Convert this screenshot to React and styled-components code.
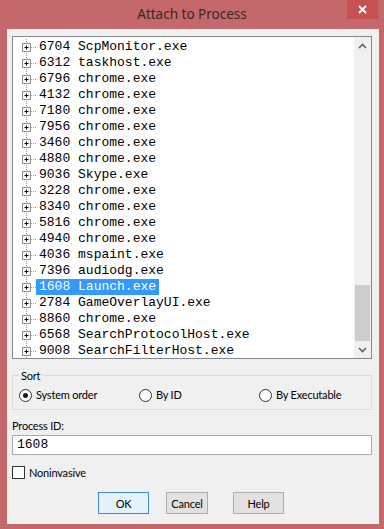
import styled, { createGlobalStyle } from "styled-components";

const GlobalStyle = createGlobalStyle`
  html, body {
    margin: 0;
    padding: 0;
    background: #c4686c;
  }
  body {
    font-family: Lato, "Noto Sans", sans-serif;
    color: #000;
  }
`;

const Window = styled.div`
  width: 384px;
  height: 529px;
  box-sizing: border-box;
  background: #c4686c;
  display: flex;
  flex-direction: column;
  padding: 0 5px 5px 7px;
`;

const TitleBar = styled.div`
  position: relative;
  height: 30px;
  margin: 0 -5px 0 -7px;
  display: flex;
  align-items: center;
  justify-content: center;
  padding-bottom: 2px;
  box-sizing: border-box;
`;

const Title = styled.div`
  font-family: "Noto Sans", sans-serif;
  font-size: 13.5px;
  color: #3a2626;
`;

const CloseButton = styled.div`
  position: absolute;
  top: 0;
  right: 6px;
  width: 31px;
  height: 19px;
  background: #c75050;
  display: flex;
  align-items: center;
  justify-content: center;
`;

const Client = styled.div`
  flex: 1;
  background: #f0f0f0;
  display: flex;
  flex-direction: column;
  padding: 7px 7px 10px 5px;
  font-size: 11px;
  letter-spacing: -0.2px;
`;

const ProcessList = styled.div`
  height: 323px;
  box-sizing: border-box;
  border: 1px solid #828790;
  background: #fff;
  display: flex;
  letter-spacing: 0;
`;

const Rows = styled.div`
  flex: 1;
  padding-top: 2px;
  overflow: hidden;
`;

const Row = styled.div`
  display: flex;
  height: 16px;
  align-items: center;
`;

const RowLabel = styled.span`
  font-family: "Liberation Mono", monospace;
  font-size: 13px;
  line-height: 16px;
  height: 16px;
  padding: 0 3px;
  white-space: pre;
  background: ${(p) => (p.$selected ? "#3399ff" : "transparent")};
  color: ${(p) => (p.$selected ? "#fff" : "#000")};
`;

const ScrollBar = styled.div`
  width: 17px;
  background: #f0f0f0;
  display: flex;
  flex-direction: column;
`;

const ScrollArrow = styled.div`
  height: 17px;
  display: flex;
  align-items: center;
  justify-content: center;
`;

const ScrollTrack = styled.div`
  flex: 1;
  display: flex;
  flex-direction: column;
  justify-content: flex-end;
`;

const ScrollThumb = styled.div`
  height: 56px;
  margin: 0 1px;
  background: #cdcdcd;
`;

const SortGroup = styled.fieldset`
  margin: 8px 0 0;
  padding: 3px 6px 6px;
  border: 1px solid #dcdcdc;
  min-width: 0;
`;

const Legend = styled.legend`
  padding: 0 2px;
  font-size: 11px;
  line-height: 17px;
`;

const RadioRow = styled.div`
  display: grid;
  grid-template-columns: repeat(3, 120px);
`;

const Option = styled.label`
  display: flex;
  align-items: center;
  gap: 4px;
  height: 16px;
  line-height: 16px;
`;

const RadioCircle = styled.span`
  width: 13px;
  height: 13px;
  box-sizing: border-box;
  border: 1px solid #333;
  border-radius: 50%;
  background: #fff;
  display: flex;
  align-items: center;
  justify-content: center;

  &::after {
    content: "";
    width: 5px;
    height: 5px;
    border-radius: 50%;
    background: ${(p) => (p.$checked ? "#1a1a1a" : "transparent")};
  }
`;

const FieldLabel = styled.div`
  margin-top: 8px;
  line-height: 15px;
`;

const TextInput = styled.div`
  margin-top: 2px;
  height: 20px;
  box-sizing: border-box;
  border: 1px solid #abadb3;
  background: #fff;
  padding: 0 4px;
  font-family: "Liberation Mono", monospace;
  font-size: 13px;
  line-height: 18px;
  letter-spacing: 0;
`;

const CheckRow = styled.label`
  margin-top: 11px;
  display: flex;
  align-items: center;
  gap: 4px;
  height: 13px;
`;

const CheckBox = styled.span`
  width: 13px;
  height: 13px;
  box-sizing: border-box;
  border: 1px solid #333;
  background: #fff;
`;

const ButtonRow = styled.div`
  margin-top: 13px;
  display: flex;
  padding-left: 86px;
  gap: 17px;
`;

const Button = styled.div`
  width: ${(p) => p.$width}px;
  height: 22px;
  box-sizing: border-box;
  border: 1px solid ${(p) => (p.$default ? "#3c8ad8" : "#adadad")};
  background: ${(p) => (p.$default ? "#e5f1fb" : "#e1e1e1")};
  display: flex;
  align-items: center;
  justify-content: center;
  margin-right: ${(p) => p.$extra || 0}px;
`;

const processes = [
  ["6704", "ScpMonitor.exe"],
  ["6312", "taskhost.exe"],
  ["6796", "chrome.exe"],
  ["4132", "chrome.exe"],
  ["7180", "chrome.exe"],
  ["7956", "chrome.exe"],
  ["3460", "chrome.exe"],
  ["4880", "chrome.exe"],
  ["9036", "Skype.exe"],
  ["3228", "chrome.exe"],
  ["8340", "chrome.exe"],
  ["5816", "chrome.exe"],
  ["4940", "chrome.exe"],
  ["4036", "mspaint.exe"],
  ["7396", "audiodg.exe"],
  ["1608", "Launch.exe"],
  ["2784", "GameOverlayUI.exe"],
  ["8860", "chrome.exe"],
  ["6568", "SearchProtocolHost.exe"],
  ["9008", "SearchFilterHost.exe"],
];

const Branch = () => (
  <svg width="23" height="16" viewBox="0 0 23 16">
    <line x1="13.5" y1="0" x2="13.5" y2="16" stroke="#a0a0a0" strokeDasharray="1 1" />
    <line x1="18" y1="8.5" x2="23" y2="8.5" stroke="#a0a0a0" strokeDasharray="1 1" />
    <rect x="9.5" y="4.5" width="8" height="8" fill="#f6f6f6" stroke="#919191" />
    <path d="M11.5 8.5h4M13.5 6.5v4" stroke="#000" />
  </svg>
);

const Chevron = ({ down }) => (
  <svg width="9" height="6" viewBox="0 0 9 6">
    <path
      d={down ? "M1 1l3.5 3.5L8 1" : "M1 5l3.5-3.5L8 5"}
      fill="none"
      stroke="#606060"
      strokeWidth="1.6"
    />
  </svg>
);

const Radio = ({ checked, children }) => (
  <Option>
    <RadioCircle $checked={checked} />
    {children}
  </Option>
);

export default function App() {
  return (
    <>
      <GlobalStyle />
      <Window>
        <TitleBar>
          <Title>Attach to Process</Title>
          <CloseButton>
            <svg width="9" height="9" viewBox="0 0 9 9">
              <path d="M1 1l7 7M8 1l-7 7" stroke="#fff" strokeWidth="1.8" />
            </svg>
          </CloseButton>
        </TitleBar>
        <Client>
          <ProcessList>
            <Rows>
              {processes.map(([pid, name]) => (
                <Row key={pid}>
                  <Branch />
                  <RowLabel $selected={pid === "1608"}>
                    {pid} {name}
                  </RowLabel>
                </Row>
              ))}
            </Rows>
            <ScrollBar>
              <ScrollArrow>
                <Chevron />
              </ScrollArrow>
              <ScrollTrack>
                <ScrollThumb />
              </ScrollTrack>
              <ScrollArrow>
                <Chevron down />
              </ScrollArrow>
            </ScrollBar>
          </ProcessList>

          <SortGroup>
            <Legend>Sort</Legend>
            <RadioRow>
              <Radio checked>System order</Radio>
              <Radio>By ID</Radio>
              <Radio>By Executable</Radio>
            </RadioRow>
          </SortGroup>

          <FieldLabel>Process ID:</FieldLabel>
          <TextInput>1608</TextInput>

          <CheckRow>
            <CheckBox />
            Noninvasive
          </CheckRow>

          <ButtonRow>
            <Button $width={51} $default>OK</Button>
            <Button $width={42} $extra={8}>Cancel</Button>
            <Button $width={51}>Help</Button>
          </ButtonRow>
        </Client>
      </Window>
    </>
  );
}
